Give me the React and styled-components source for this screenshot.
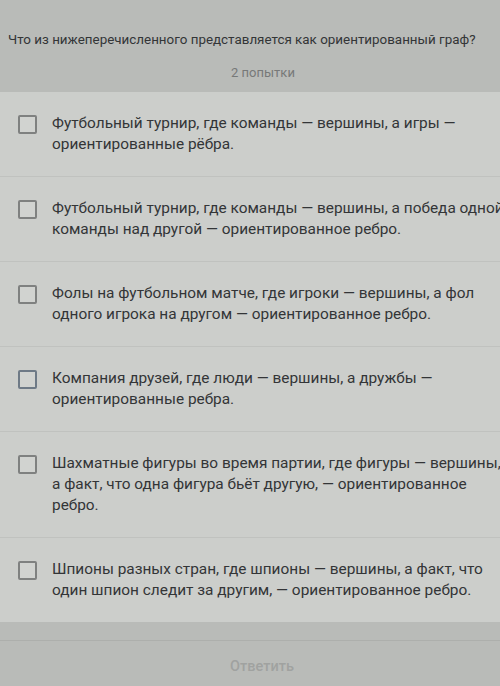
import styled, { createGlobalStyle } from "styled-components";

const GlobalStyle = createGlobalStyle`
  html, body {
    margin: 0;
    padding: 0;
    background: #b9bbb8;
    overflow: hidden;
  }
  body {
    font-family: Roboto, "Noto Sans", "DejaVu Sans", sans-serif;
  }
`;

const Page = styled.div`
  width: 526px;
  height: 686px;
  display: flex;
  flex-direction: column;
  background: #b9bbb8;
  color: #333537;
`;

const Header = styled.div`
  padding: 32px 0 11px 8px;
  display: flex;
  flex-direction: column;
  gap: 17px;
`;

const Question = styled.div`
  font-size: 13.4px;
  line-height: 16px;
  color: #333537;
`;

const Attempts = styled.div`
  text-align: center;
  font-size: 13px;
  line-height: 16px;
  color: #777978;
  margin-right: 8px;
`;

const OptionList = styled.div`
  display: flex;
  flex-direction: column;
  gap: 1px;
  background: #c0c2bf;
  margin-bottom: 18px;
`;

const Option = styled.label`
  display: flex;
  align-items: flex-start;
  gap: 15px;
  padding: 21px 20px 21px 18px;
  background: #cccecb;
`;

const Box = styled.span`
  flex: none;
  width: 19px;
  height: 19px;
  margin-top: 2px;
  box-sizing: border-box;
  border: 2px solid ${(p) => (p.$focus ? "#6e7a86" : "#7f8180")};
  border-radius: 2px;
  background: #d1d3d0;
`;

const OptionText = styled.span`
  font-size: 15.4px;
  line-height: 21px;
  color: #333537;
`;

const Footer = styled.div`
  border-top: 1px solid #adafac;
  flex: 1;
  display: flex;
  justify-content: center;
  padding-top: 15px;
`;

const Submit = styled.button`
  border: none;
  background: none;
  padding: 0;
  margin-right: 2px;
  font-family: inherit;
  font-size: 14.5px;
  font-weight: 500;
  color: #a0a2a0;
  height: 20px;
`;

const options = [
  "Футбольный турнир, где команды — вершины, а игры — ориентированные рёбра.",
  "Футбольный турнир, где команды — вершины, а победа одной команды над другой — ориентированное ребро.",
  "Фолы на футбольном матче, где игроки — вершины, а фол одного игрока на другом — ориентированное ребро.",
  "Компания друзей, где люди — вершины, а дружбы — ориентированные ребра.",
  "Шахматные фигуры во время партии, где фигуры — вершины, а факт, что одна фигура бьёт другую, — ориентированное ребро.",
  "Шпионы разных стран, где шпионы — вершины, а факт, что один шпион следит за другим, — ориентированное ребро.",
];

export default function App() {
  return (
    <>
      <GlobalStyle />
      <Page>
        <Header>
          <Question>
            Что из нижеперечисленного представляется как ориентированный граф?
          </Question>
          <Attempts>2 попытки</Attempts>
        </Header>
        <OptionList>
          {options.map((text, i) => (
            <Option key={i}>
              <Box $focus={i === 3} />
              <OptionText>{text}</OptionText>
            </Option>
          ))}
        </OptionList>
        <Footer>
          <Submit disabled>Ответить</Submit>
        </Footer>
      </Page>
    </>
  );
}
